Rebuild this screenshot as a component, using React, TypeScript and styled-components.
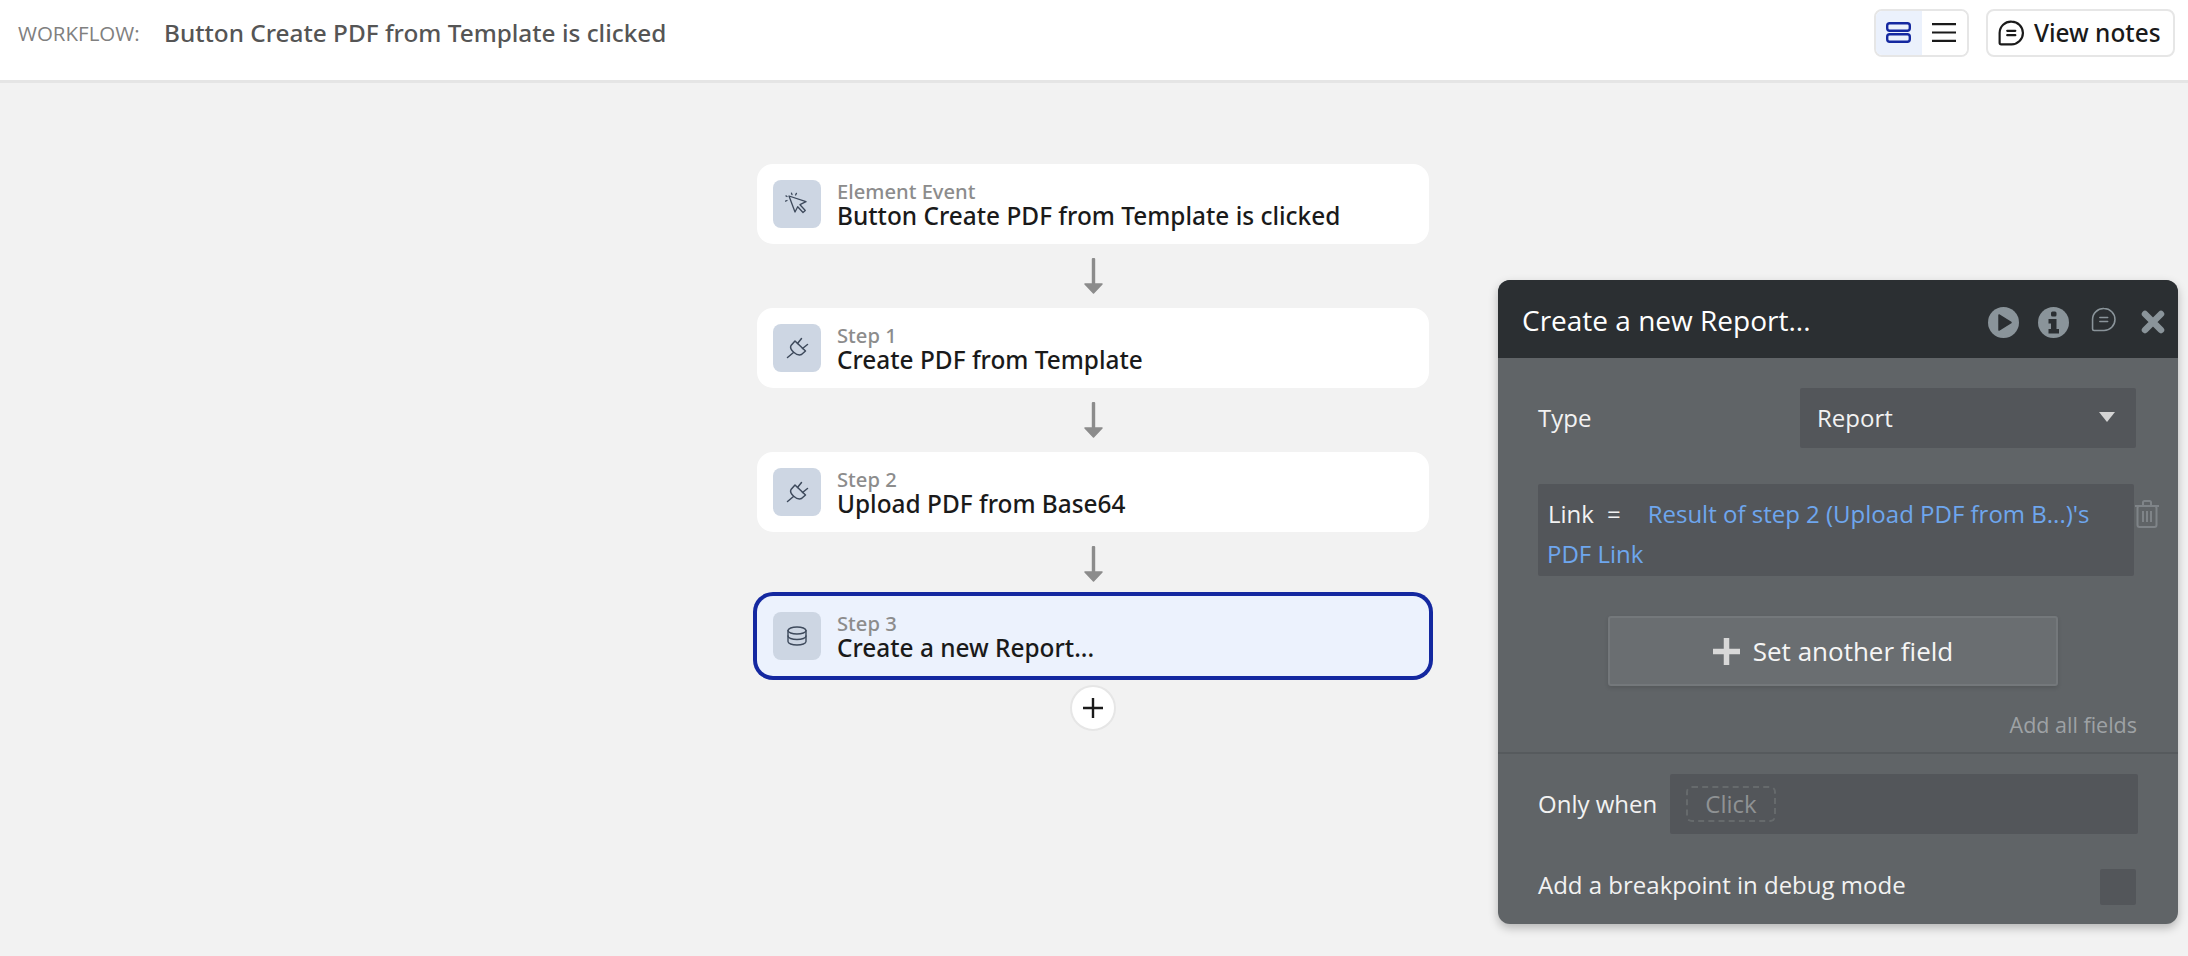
import React from "react";
import styled, { createGlobalStyle } from "styled-components";

const Global = createGlobalStyle`
  html, body { margin: 0; padding: 0; }
  body { font-family: "Open Sans", "Noto Sans", sans-serif; background: #f2f2f2; }
  * { box-sizing: border-box; }
`;

const Page = styled.div`
  position: relative;
  width: 2188px;
  height: 956px;
  overflow: hidden;
  background: #f2f2f2;
`;

const TopBar = styled.header`
  display: flex;
  align-items: center;
  height: 83px;
  padding: 0 13px 15px 18px;
  background: #fff;
  border-bottom: 3px solid #e5e5e5;
`;

const WorkflowLabel = styled.span`
  font-size: 20.5px;
  color: #808080;
  width: 146px;
`;

const WorkflowName = styled.span`
  font-family: "Noto Sans", sans-serif;
  font-size: 24.35px;
  font-weight: 500;
  color: #555;
  flex: 1;
`;

const Toggle = styled.div`
  display: flex;
  width: 95px;
  height: 48px;
  border: 2px solid #e6e6e6;
  border-radius: 8px;
  overflow: hidden;
`;

const ToggleCell = styled.div<{ $active?: boolean }>`
  display: flex;
  align-items: center;
  justify-content: center;
  flex: 1;
  background: ${(p) => (p.$active ? "#ebf1fc" : "#fff")};
`;

const NotesButton = styled.div`
  display: flex;
  align-items: center;
  gap: 10px;
  width: 189px;
  height: 48px;
  margin-left: 17px;
  padding-left: 10px;
  border: 2px solid #e6e6e6;
  border-radius: 8px;
  font-family: "Noto Sans", sans-serif;
  font-size: 24.4px;
  font-weight: 500;
  color: #1a1a1a;
  background: #fff;
`;

const Canvas = styled.main`
  display: flex;
  flex-direction: column;
  align-items: center;
  width: 672px;
  margin-left: 757px;
  padding-top: 81px;
`;

const Card = styled.div<{ $selected?: boolean }>`
  display: flex;
  align-items: center;
  gap: 16px;
  width: 672px;
  height: 80px;
  padding-left: 16px;
  border-radius: 16px;
  background: ${(p) => (p.$selected ? "#ecf2fd" : "#fff")};
  box-shadow: ${(p) => (p.$selected ? "0 0 0 4px #1428a0" : "none")};
`;

const IconTile = styled.div`
  display: flex;
  align-items: center;
  justify-content: center;
  width: 48px;
  height: 48px;
  border-radius: 8px;
  background: #cdd6e3;
`;

const CardText = styled.div`
  display: flex;
  flex-direction: column;
  padding-bottom: 2px;
  font-family: "Noto Sans", sans-serif;
  font-weight: 500;
`;

const CardKind = styled.span`
  font-size: 20.2px;
  line-height: 24px;
  color: #8c8c8c;
`;

const CardTitle = styled.span`
  font-size: 24.4px;
  line-height: 25px;
  color: #1a1a1a;
`;

const Connector = styled.div`
  display: flex;
  align-items: center;
  justify-content: center;
  height: 64px;
`;

const AddStep = styled.div`
  display: flex;
  align-items: center;
  justify-content: center;
  width: 46px;
  height: 46px;
  margin-top: 9px;
  border: 2px solid #e6e6e6;
  border-radius: 50%;
  background: #fff;
`;

const Panel = styled.aside`
  position: absolute;
  left: 1498px;
  top: 280px;
  width: 680px;
  height: 644px;
  border-radius: 12px;
  overflow: hidden;
  background: #606467;
  box-shadow: 0 4px 10px rgba(0, 0, 0, 0.25);
  color: #f2f2f2;
  font-size: 24px;
`;

const PanelHead = styled.div`
  display: flex;
  align-items: center;
  height: 78px;
  padding-left: 24px;
  background: #2b2f32;
`;

const PanelTitle = styled.div`
  flex: 1;
  padding-top: 2px;
  font-size: 28px;
  color: #fff;
`;

const HeadIcons = styled.div`
  display: flex;
  align-items: center;
  padding-top: 6px;
`;

const HeadSlot = styled.div<{ $raise?: number }>`
  display: flex;
  align-items: center;
  justify-content: center;
  width: 50px;
  margin-bottom: ${(p) => p.$raise ?? 0}px;
`;

const TypeRow = styled.div`
  display: flex;
  align-items: center;
  justify-content: space-between;
  height: 60px;
  margin: 30px 42px 0 40px;
`;

const Label = styled.span`
  padding-bottom: 2px;
  color: #f2f2f2;
`;

const BreakLabel = styled(Label)`
  padding-bottom: 5px;
`;

const Select = styled.div`
  display: flex;
  align-items: center;
  justify-content: space-between;
  width: 336px;
  height: 60px;
  padding: 0 21px 2px 17px;
  border-radius: 2px;
  background: #53565a;
`;

const FieldRow = styled.div`
  display: flex;
  align-items: flex-start;
  margin: 36px 0 0 40px;
`;

const FieldBox = styled.div`
  width: 596px;
  height: 92px;
  padding: 10px 30px 0 9px;
  border-radius: 2px;
  background: #53565a;
  line-height: 40px;
`;

const FieldName = styled.span`
  margin-left: 1px;
  margin-right: 13px;
`;

const FieldEquals = styled.span`
  margin-right: 27px;
`;

const FieldValue = styled.span`
  color: #6ea6ee;
`;

const TrashSlot = styled.div`
  margin-top: 16px;
`;

const AddFieldButton = styled.div`
  display: flex;
  align-items: center;
  justify-content: center;
  gap: 13px;
  width: 450px;
  height: 70px;
  margin: 40px 0 0 110px;
  border: 2px solid #74787b;
  border-radius: 3px;
  background: #6a6e71;
  box-shadow: 0 2px 4px rgba(0, 0, 0, 0.12);
  color: #f5f5f5;
  font-size: 26px;
`;

const AddAll = styled.div`
  margin: 25px 41px 0 0;
  text-align: right;
  font-size: 21.5px;
  line-height: 28px;
  color: #9ea2a5;
`;

const Divider = styled.div`
  height: 2px;
  margin-top: 13px;
  background: #565a5d;
`;

const WhenRow = styled.div`
  display: flex;
  align-items: center;
  justify-content: space-between;
  height: 60px;
  margin: 20px 40px 0 40px;
`;

const WhenBox = styled.div`
  display: flex;
  align-items: center;
  width: 468px;
  height: 60px;
  padding-left: 16px;
  border-radius: 2px;
  background: #53565a;
`;

const ClickSlot = styled.div`
  display: flex;
  align-items: center;
  justify-content: center;
  width: 90px;
  height: 36px;
  padding-bottom: 2px;
  border: 2px dashed #666a6c;
  border-radius: 6px;
  color: #8f9294;
`;

const BreakRow = styled.div`
  display: flex;
  align-items: center;
  justify-content: space-between;
  margin: 34px 42px 0 40px;
`;

const Check = styled.div`
  width: 36px;
  height: 36px;
  border-radius: 2px;
  background: #53565a;
`;

const ChatIcon = ({ size, color, width }: { size: number; color: string; width: number }) => (
  <svg width={size} height={size} viewBox="0 0 24 24" fill="none" stroke={color} strokeWidth={width}>
    <path d="M12.5 1.5a10.5 10.5 0 1 1 0 21H3a1.5 1.5 0 0 1-1.5-1.5v-9A10.5 10.5 0 0 1 12.5 1.5z" strokeLinejoin="round" />
    <path d="M8.5 10h7.5M8.5 14h7.5" strokeLinecap="round" />
  </svg>
);

const CursorIcon = () => (
  <svg width="24" height="24" viewBox="0 0 24 24" fill="none" stroke="#3e4a5c" strokeWidth="1.3" strokeLinejoin="round" strokeLinecap="round">
    <path d="M4 4l17 5.700-6 3 5.300 5.800-2.300 2-5.300-5.700L10 20z" />
    <path d="M2 8.500l-1.500.6M7 2.600l-.5-1.500M10.600 3l.8-1.600M2 4.500l-1-.6" />
  </svg>
);

const PlugIcon = () => (
  <svg width="24" height="24" viewBox="0 0 24 24" fill="none" stroke="#3e4a5c" strokeWidth="1.5" strokeLinejoin="round" strokeLinecap="round">
    <path d="M10 5L20.500 15l-4 3.500q-3.500 1.500-7.800-2.300T6 9.500z" />
    <path d="M2.500 21.500l6-5M12.500 7.500l4-5M17.500 12.500l5-4" />
  </svg>
);

const DbIcon = () => (
  <svg width="24" height="24" viewBox="0 0 24 24" fill="none" stroke="#3e4a5c" strokeWidth="1.4" strokeLinecap="round">
    <ellipse cx="12" cy="6.500" rx="9" ry="3.500" />
    <path d="M3 6.500v11c0 2 4 3.500 9 3.500s9-1.500 9-3.500v-11" />
    <path d="M3 12c0 2 4 3.500 9 3.500s9-1.500 9-3.500" />
  </svg>
);

const DownArrow = () => (
  <svg width="19" height="36" viewBox="0 0 19 36" fill="#8c8c8c">
    <rect x="7.800" y="0" width="3.400" height="28" rx="1" />
    <path d="M1 26h17l-8.500 9z" stroke="#8c8c8c" strokeWidth="1.500" strokeLinejoin="round" />
  </svg>
);

const steps = [
  { kind: "Element Event", title: "Button Create PDF from Template is clicked", icon: <CursorIcon /> },
  { kind: "Step 1", title: "Create PDF from Template", icon: <PlugIcon /> },
  { kind: "Step 2", title: "Upload PDF from Base64", icon: <PlugIcon /> },
  { kind: "Step 3", title: "Create a new Report...", icon: <DbIcon />, selected: true },
];

export default function App() {
  return (
    <Page>
      <Global />
      <TopBar>
        <WorkflowLabel>WORKFLOW:</WorkflowLabel>
        <WorkflowName>Button Create PDF from Template is clicked</WorkflowName>
        <Toggle>
          <ToggleCell $active>
            <svg width="25" height="21" viewBox="0 0 25 21" fill="none" stroke="#1428a0" strokeWidth="2.400">
              <rect x="1.200" y="1.200" width="22.600" height="7.600" rx="2.500" />
              <rect x="1.200" y="12.200" width="22.600" height="7.600" rx="2.500" />
            </svg>
          </ToggleCell>
          <ToggleCell>
            <svg width="24" height="19" viewBox="0 0 24 19" stroke="#1a1a1a" strokeWidth="2.200">
              <path d="M0 1.200h24M0 9.500h24M0 17.800h24" />
            </svg>
          </ToggleCell>
        </Toggle>
        <NotesButton>
          <ChatIcon size={26} color="#1a1a1a" width={2} />
          View notes
        </NotesButton>
      </TopBar>

      <Canvas>
        {steps.map((s, i) => (
          <React.Fragment key={s.kind}>
            {i > 0 && (
              <Connector>
                <DownArrow />
              </Connector>
            )}
            <Card $selected={s.selected}>
              <IconTile>{s.icon}</IconTile>
              <CardText>
                <CardKind>{s.kind}</CardKind>
                <CardTitle>{s.title}</CardTitle>
              </CardText>
            </Card>
          </React.Fragment>
        ))}
        <AddStep>
          <svg width="20" height="20" viewBox="0 0 20 20" stroke="#1a1a1a" strokeWidth="2.400">
            <path d="M10 0v20M0 10h20" />
          </svg>
        </AddStep>
      </Canvas>

      <Panel>
        <PanelHead>
          <PanelTitle>Create a new Report...</PanelTitle>
          <HeadIcons>
            <HeadSlot>
              <svg width="31" height="31" viewBox="0 0 31 31">
                <circle cx="15.500" cy="15.500" r="15.500" fill="#8a949a" />
                <path d="M11 8l12 7.500L11 23z" fill="#2b2f32" stroke="#2b2f32" strokeWidth="1.500" strokeLinejoin="round" />
              </svg>
            </HeadSlot>
            <HeadSlot>
              <svg width="31" height="31" viewBox="0 0 31 31">
                <circle cx="15.500" cy="15.500" r="15.500" fill="#8a949a" />
                <rect x="13" y="4.500" width="5.500" height="5" rx="1.500" fill="#2b2f32" />
                <path d="M10.500 12h8v10h2.500v4.500H10.500V22H13v-5.500h-2.500z" fill="#2b2f32" />
              </svg>
            </HeadSlot>
            <HeadSlot $raise={6}>
              <ChatIcon size={25} color="#8a949a" width={1.500} />
            </HeadSlot>
            <HeadSlot>
              <svg width="24" height="24" viewBox="0 0 24 24" stroke="#8a949a" strokeWidth="6.500" strokeLinecap="round">
                <path d="M4 4l16 16M20 4L4 20" />
              </svg>
            </HeadSlot>
          </HeadIcons>
        </PanelHead>

        <TypeRow>
          <Label>Type</Label>
          <Select>
            Report
            <svg width="16" height="10" viewBox="0 0 16 10" fill="#d4d4d4">
              <path d="M0 0h16L8 10z" />
            </svg>
          </Select>
        </TypeRow>

        <FieldRow>
          <FieldBox>
            <FieldName>Link</FieldName>
            <FieldEquals>=</FieldEquals>
            <FieldValue>Result of step 2 (Upload PDF from B...)'s PDF Link</FieldValue>
          </FieldBox>
          <TrashSlot>
            <svg width="26" height="28" viewBox="0 0 26 28" fill="none" stroke="#7f8488" strokeWidth="2">
              <path d="M1 6h24M9 6V2.500A1.500 1.500 0 0 1 10.500 1h5A1.500 1.500 0 0 1 17 2.500V6" />
              <rect x="3.500" y="6" width="19" height="21" rx="2" />
              <path d="M9 11v11M13 11v11M17 11v11" />
            </svg>
          </TrashSlot>
        </FieldRow>

        <AddFieldButton>
          <svg width="27" height="27" viewBox="0 0 27 27" stroke="#d8d8d8" strokeWidth="5.500">
            <path d="M13.500 0v27M0 13.500h27" />
          </svg>
          Set another field
        </AddFieldButton>

        <AddAll>Add all fields</AddAll>
        <Divider />

        <WhenRow>
          <Label>Only when</Label>
          <WhenBox>
            <ClickSlot>Click</ClickSlot>
          </WhenBox>
        </WhenRow>

        <BreakRow>
          <BreakLabel>Add a breakpoint in debug mode</BreakLabel>
          <Check />
        </BreakRow>
      </Panel>
    </Page>
  );
}
